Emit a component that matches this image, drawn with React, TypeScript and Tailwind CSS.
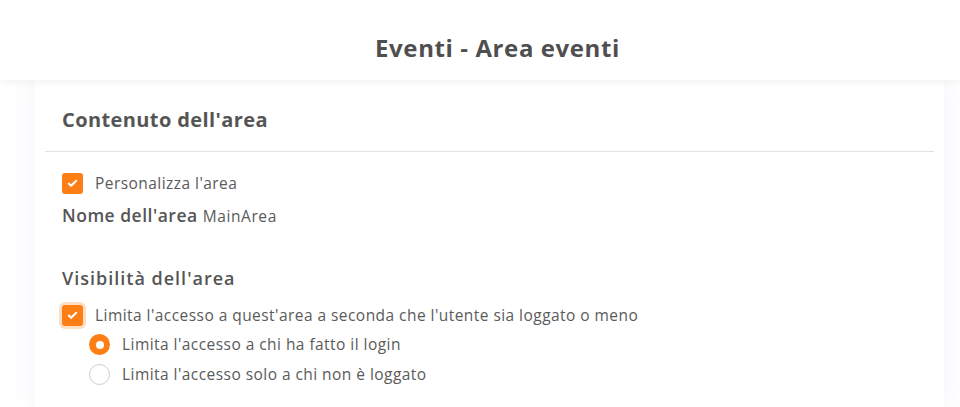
import { Check } from 'lucide-react';

function Checkbox({ focused }: { focused?: boolean }) {
  return (
    <span
      className={
        'flex h-[21px] w-[21px] shrink-0 items-center justify-center rounded-[3px] bg-[#fd7e14] ' +
        (focused ? 'ring-[3px] ring-[#fd7e14]/25' : '')
      }
    >
      <Check size={11} strokeWidth={4.5} className="text-white" />
    </span>
  );
}

function Radio({ checked }: { checked?: boolean }) {
  return checked ? (
    <span className="flex h-[21px] w-[21px] shrink-0 items-center justify-center rounded-full bg-[#fd7e14]">
      <span className="h-[8px] w-[8px] rounded-full bg-white" />
    </span>
  ) : (
    <span className="h-[21px] w-[21px] shrink-0 rounded-full border border-[#c5cddb] bg-white" />
  );
}

export default function App() {
  return (
    <div className="min-h-screen bg-white font-['Open_Sans',sans-serif] text-[#555]">
      {/* Header */}
      <header className="relative z-10 flex h-[80px] items-center justify-center bg-white pl-[35px] pt-[16px] shadow-[0_2px_8px_rgba(0,0,0,0.06)]">
        <h1 className="text-[24px] font-bold leading-[30px] tracking-[0.6px] text-[#4f4f4f]">Eventi - Area eventi</h1>
      </header>

      <div className="px-[35px] pr-[16px]">
        <div className="bg-white pb-6 shadow-[0_0_24px_rgba(90,120,220,0.08)]">
          {/* Card header */}
          <div className="mx-[10px] border-b border-[#e2e2e2] px-[17px] pb-[16px] pt-[25px]">
            <h2 className="text-[20px] font-bold leading-[30px] tracking-[0.4px] text-[#555]">Contenuto dell'area</h2>
          </div>

          <div className="px-[27px] pt-[21px] text-[15.5px] leading-[21px] tracking-[0.45px]">
            <label className="flex items-center gap-[12px]">
              <Checkbox />
              <span className="text-[#5a5a5a]">Personalizza l'area</span>
            </label>

            <div className="mt-[9px] flex items-baseline gap-[5px]">
              <span className="text-[17.5px] font-semibold leading-[24px] tracking-[0.5px] text-[#555]">Nome dell'area</span>
              <span className="text-[15.5px] tracking-[0.6px] text-[#5a5a5a]">MainArea</span>
            </div>

            <h3 className="mt-[39px] text-[18px] font-semibold leading-[24px] tracking-[1px] text-[#555]">Visibilità dell'area</h3>

            <label className="mt-[15px] flex items-center gap-[12px]">
              <Checkbox focused />
              <span className="text-[#5a5a5a]">
                Limita l'accesso a quest'area a seconda che l'utente sia loggato o meno
              </span>
            </label>

            <div className="mt-[8px] flex flex-col gap-[9px] pl-[27px]">
              <label className="flex items-center gap-[12px]">
                <Radio checked />
                <span className="text-[#5a5a5a]">Limita l'accesso a chi ha fatto il login</span>
              </label>
              <label className="flex items-center gap-[12px]">
                <Radio />
                <span className="text-[#5a5a5a]">Limita l'accesso solo a chi non è loggato</span>
              </label>
            </div>
          </div>
        </div>
      </div>
    </div>
  );
}
